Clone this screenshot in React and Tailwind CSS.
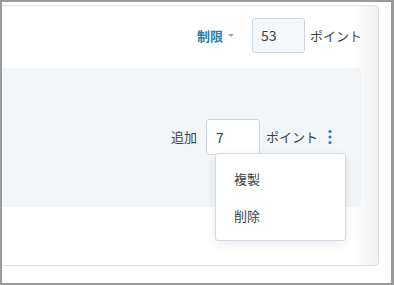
import React from 'react';

const font = { fontFamily: '"Noto Sans CJK JP", "Noto Sans", sans-serif' };

const App = () => {
  return (
    <div className="w-[394px] h-[285px] bg-[#9a9a9a] pl-[2px] pt-[2px] pr-[3px] pb-[2px] text-[13px] text-[#3a3f45]" style={font}>
      <div className="h-full bg-white pt-[3px] pr-[12px] overflow-hidden flex">
        {/* Card */}
        <div className="relative -ml-4 flex-1 h-[261px] border border-[#dcdde6] rounded-r-[4px] flex flex-col">
          {/* Top row */}
          <div className="h-[62px] flex items-center justify-end pr-[15px] pb-[3px]">
            <button className="flex items-center gap-[5px] font-bold text-[#2c7fa6]">
              制限
              <span className="w-0 h-0 border-l-[3px] border-r-[3px] border-t-[3px] border-l-transparent border-r-transparent border-t-[#9aa3ab]" />
            </button>
            <div className="ml-[18px] w-[53px] h-[35px] bg-[#f4f7fa] border border-[#ccd5de] rounded-[3px] flex items-center pl-[8px] text-[14px]">53</div>
            <span className="ml-[5px] mr-[1px]">ポイント</span>
          </div>

          {/* Panel */}
          <div className="relative mr-[17px] h-[139px] bg-[#f3f6f9] rounded-r-[4px] flex items-center justify-end pr-[28px] pb-[1px]">
            <span className="mr-[9px]">追加</span>
            <div className="relative w-[54px] h-[36px] bg-white border border-[#ccd5de] rounded-[3px] flex items-center pl-[9px] text-[14px]">
              7
              {/* Menu */}
              <div className="absolute left-[8px] top-[33px] w-[131px] h-[88px] bg-white border border-[#d2dae3] rounded-[3px] shadow-[0_4px_12px_rgba(0,0,0,0.08)] z-10 flex flex-col justify-center gap-[18px] pl-[18px] text-[13px] text-[#3a3f45]">
                <span>複製</span>
                <span>削除</span>
              </div>
            </div>
            <span className="ml-[6px]">ポイント</span>
            <svg className="ml-[9px]" width="6" height="16" viewBox="0 0 6 16">
              <circle cx="3" cy="2.5" r="1.6" fill="#2c7fa6" />
              <circle cx="3" cy="8" r="1.6" fill="#2c7fa6" />
              <circle cx="3" cy="13.5" r="1.6" fill="#2c7fa6" />
            </svg>
          </div>

          {/* Right fade */}
          <div className="pointer-events-none absolute right-0 top-0 bottom-0 w-[26px] bg-gradient-to-r from-transparent to-[#f0f0f0] rounded-r-[4px]" />
        </div>
      </div>
    </div>
  );
};

export default App;
